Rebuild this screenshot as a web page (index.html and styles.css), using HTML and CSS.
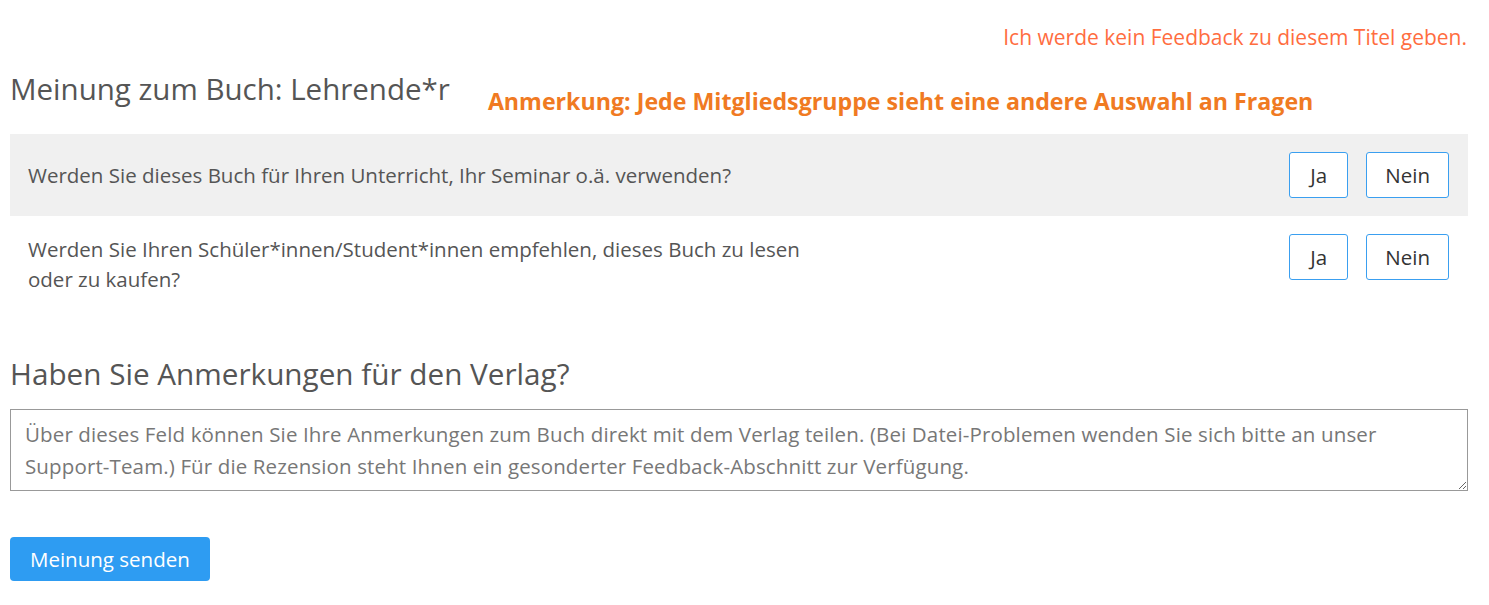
FILE: index.html
```html
<!DOCTYPE html>
<html lang="de">
<head>
<meta charset="utf-8">
<title>Meinung zum Buch</title>
<link rel="stylesheet" href="styles.css">
</head>
<body>
<main class="page">
  <div class="topbar">
    <a class="skip-link" href="#">Ich werde kein Feedback zu diesem Titel geben.</a>
  </div>

  <header class="section-head">
    <h2 class="title">Meinung zum Buch: Lehrende*r</h2>
    <p class="note">Anmerkung: Jede Mitgliedsgruppe sieht eine andere Auswahl an Fragen</p>
  </header>

  <div class="questions">
    <div class="q-row q-row--shaded">
      <div class="q-text">Werden Sie dieses Buch für Ihren Unterricht, Ihr Seminar o.ä. verwenden?</div>
      <div class="q-actions">
        <button class="choice" type="button">Ja</button>
        <button class="choice" type="button">Nein</button>
      </div>
    </div>
    <div class="q-row">
      <div class="q-text q-text--narrow">Werden Sie Ihren Schüler*innen/Student*innen empfehlen, dieses Buch zu lesen oder zu kaufen?</div>
      <div class="q-actions">
        <button class="choice" type="button">Ja</button>
        <button class="choice" type="button">Nein</button>
      </div>
    </div>
  </div>

  <h3 class="subtitle">Haben Sie Anmerkungen für den Verlag?</h3>
  <textarea class="remarks" rows="2">Über dieses Feld können Sie Ihre Anmerkungen zum Buch direkt mit dem Verlag teilen. (Bei Datei-Problemen wenden Sie sich bitte an unser Support-Team.) Für die Rezension steht Ihnen ein gesonderter Feedback-Abschnitt zur Verfügung.</textarea>

  <div class="submit-row">
    <button class="submit" type="button">Meinung senden</button>
  </div>
</main>
</body>
</html>
```

FILE: styles.css
```css
html, body {
  margin: 0;
  padding: 0;
  background: #ffffff;
}

body {
  font-family: "Open Sans", "Liberation Sans", sans-serif;
  color: #555555;
}

.page {
  padding: 0 21px 0 10px;
}

.topbar {
  display: flex;
  justify-content: flex-end;
  padding-top: 23px;
}

.skip-link {
  font-size: 21px;
  line-height: 28px;
  color: #ff6d3f;
  text-decoration: none;
  margin-right: 1px;
}

.section-head {
  display: flex;
  align-items: flex-start;
  margin-top: 20px;
  height: 63px;
}

.title {
  margin: 0;
  font-size: 29.5px;
  line-height: 36px;
  font-weight: 400;
  color: #555555;
}

.note {
  margin: 16px 0 0 38px;
  font-size: 23.2px;
  line-height: 29px;
  font-weight: 700;
  color: #f07a22;
}

.questions {
  display: flex;
  flex-direction: column;
}

.q-row {
  display: flex;
  align-items: center;
  justify-content: space-between;
  padding: 18px 19px 18px 18px;
}

.q-row--shaded {
  background: #f0f0f0;
}

.q-text {
  font-size: 20.5px;
  line-height: 30px;
  color: #555555;
}

.q-text--narrow {
  max-width: 790px;
}

.q-actions {
  align-self: flex-start;
  display: flex;
  gap: 18px;
  flex-shrink: 0;
}

.choice {
  height: 46px;
  min-width: 59px;
  padding: 0 18px;
  background: #ffffff;
  border: 1px solid #3a9ff0;
  border-radius: 3px;
  font-family: inherit;
  font-size: 20.5px;
  color: #333333;
  cursor: pointer;
}

.subtitle {
  margin: 44px 0 17px;
  font-size: 29.7px;
  line-height: 36px;
  font-weight: 400;
  color: #555555;
}

.remarks {
  display: block;
  box-sizing: border-box;
  width: 100%;
  height: 82px;
  margin: 0;
  padding: 8px 14px;
  border: 1px solid #999999;
  border-radius: 0;
  font-family: inherit;
  font-size: 20.5px;
  line-height: 32px;
  letter-spacing: 0.13px;
  color: #777777;
  resize: vertical;
}

.submit-row {
  margin-top: 46px;
}

.submit {
  height: 44px;
  padding: 0 20px;
  background: #2e9cf2;
  border: 0;
  border-radius: 4px;
  font-family: inherit;
  font-size: 20.5px;
  color: #ffffff;
  cursor: pointer;
}
```
